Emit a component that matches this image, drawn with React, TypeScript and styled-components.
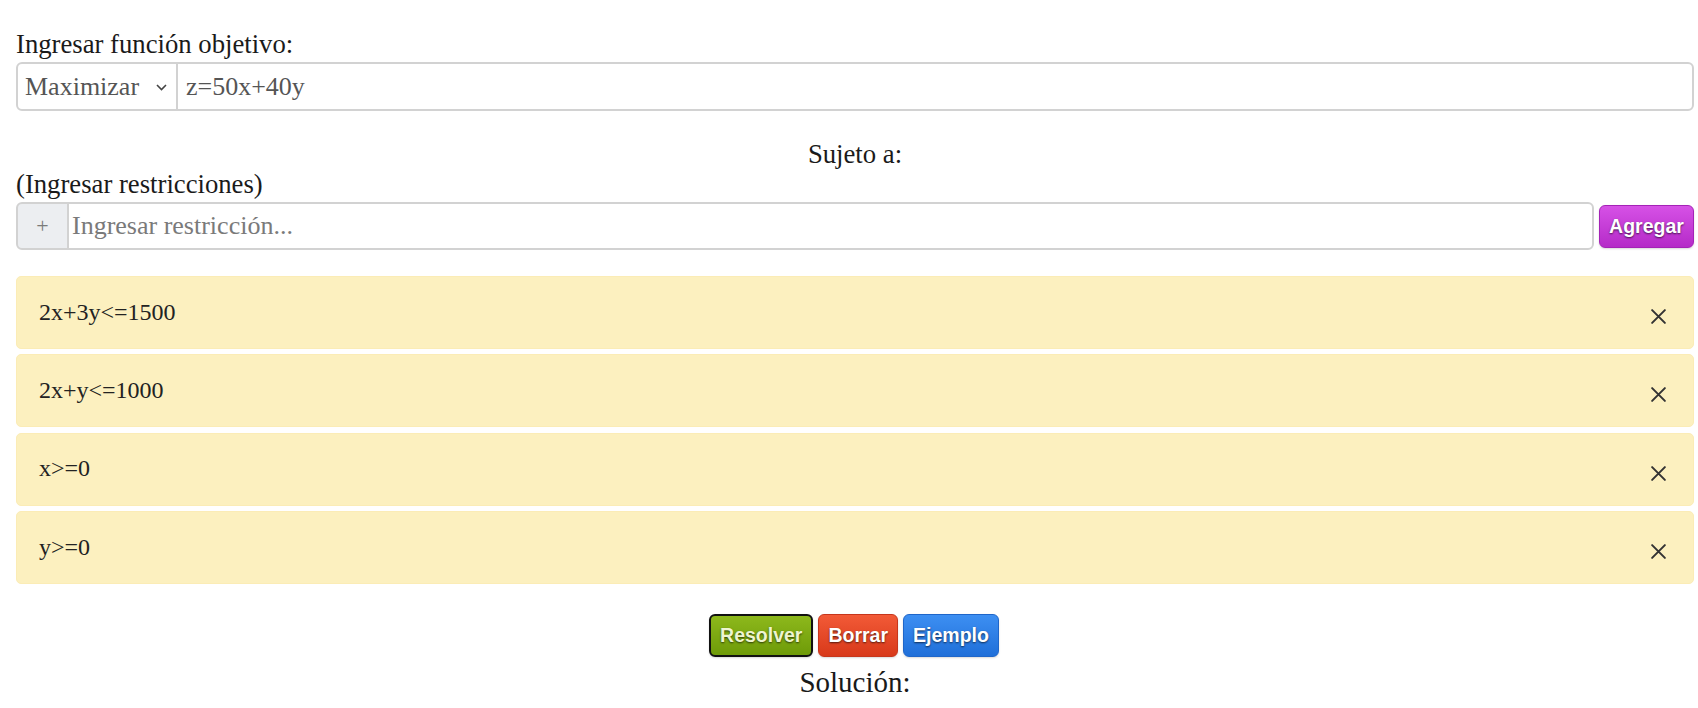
import React from 'react';
import styled, { createGlobalStyle, css } from 'styled-components';

const GlobalStyle = createGlobalStyle`
  html, body {
    margin: 0;
    padding: 0;
    background: #ffffff;
  }
  body {
    font-family: 'Liberation Serif', 'Times New Roman', serif;
    color: #1a1a1a;
  }
`;

const Page = styled.div`
  width: 1678px;
  margin-left: 16px;
  font-size: 26.7px;
`;

const Label = styled.div<{ $top: number; $center?: boolean }>`
  margin-top: ${p => p.$top}px;
  margin-bottom: 3px;
  line-height: 30px;
  text-align: ${p => (p.$center ? 'center' : 'left')};
`;

const InputGroup = styled.div<{ $height: number }>`
  display: flex;
  align-items: stretch;
  height: ${p => p.$height}px;
`;

const fieldBase = css`
  box-sizing: border-box;
  border: 2px solid #d2d2d2;
  font-family: 'Liberation Serif', 'Times New Roman', serif;
  font-size: 26px;
  color: #555;
  background: #fff;
  outline: none;
`;

const SelectWrap = styled.div`
  ${fieldBase};
  position: relative;
  width: 162px;
  border-radius: 6px 0 0 6px;
  display: flex;
  align-items: center;
  padding-left: 7px;
`;

const Chevron = styled.svg`
  position: absolute;
  right: 9px;
  top: 50%;
  margin-top: -3px;
`;

const TextField = styled.input<{ $pad: number }>`
  ${fieldBase};
  flex: 1;
  min-width: 0;
  padding: 0 10px 0 ${p => p.$pad}px;
  margin-left: -2px;
  border-radius: 0 6px 6px 0;
  &::placeholder {
    color: #7a7a7a;
  }
`;

const Addon = styled.div`
  ${fieldBase};
  width: 53px;
  background: #eceef1;
  border-radius: 6px 0 0 6px;
  color: #7a7a7a;
  display: flex;
  align-items: center;
  justify-content: center;
  font-size: 22px;
`;

const gradients = {
  purple: ['#d651e6', '#b52bc8', '#a423b6'],
  green: ['#8db81c', '#6e9b08', '#111111'],
  red: ['#f25a37', '#d8391a', '#c6361c'],
  blue: ['#3d8ff2', '#1f6fd9', '#1f66c9'],
};

type Tone = keyof typeof gradients;

const Button = styled.button<{ $tone: Tone; $focused?: boolean }>`
  box-sizing: border-box;
  height: 43px;
  padding: 0 9px;
  border-radius: 6px;
  border: ${p => (p.$focused ? '2px' : '1px')} solid ${p => gradients[p.$tone][2]};
  background: linear-gradient(to bottom, ${p => gradients[p.$tone][0]}, ${p => gradients[p.$tone][1]});
  color: ${p => (p.$tone === 'green' ? '#eef5d0' : '#ffffff')};
  font-family: 'Liberation Sans', Arial, sans-serif;
  font-weight: bold;
  font-size: 19.5px;
  text-shadow: 0 1px 2px rgba(0, 0, 0, 0.65);
  box-shadow: 0 1px 2px rgba(0, 0, 0, 0.15);
  cursor: pointer;
`;

const AddButton = styled(Button)`
  margin-left: 5px;
  align-self: center;
  width: 95px;
`;

const List = styled.div`
  margin-top: 26px;
  display: flex;
  flex-direction: column;
  gap: 5.33px;
`;

const Row = styled.div`
  box-sizing: border-box;
  height: 73px;
  background: #fcf0bf;
  border: 1px solid #fbecb6;
  border-radius: 5px;
  display: flex;
  align-items: center;
  justify-content: space-between;
  padding: 0 26px 0 22px;
  font-size: 24px;
  line-height: 1.15;
  color: #222;
`;

const Close = styled.svg`
  margin-top: 8px;
  cursor: pointer;
`;

const Actions = styled.div`
  margin-top: 30px;
  display: flex;
  justify-content: center;
  gap: 5px;
  padding-right: 2px;
`;

const Title = styled.div`
  margin-top: 9px;
  text-align: center;
  font-size: 29px;
  line-height: 32px;
`;

const restrictions = ['2x+3y<=1500', '2x+y<=1000', 'x>=0', 'y>=0'];

const CloseIcon = () => (
  <Close width="17" height="17" viewBox="0 0 16 16">
    <path d="M2 2 L14 14 M14 2 L2 14" stroke="#333" strokeWidth="1.9" strokeLinecap="round" />
  </Close>
);

export default function App() {
  return (
    <>
      <GlobalStyle />
      <Page>
        <Label $top={29}>Ingresar función objetivo:</Label>
        <InputGroup $height={49}>
          <SelectWrap>
            Maximizar
            <Chevron width="11" height="7" viewBox="0 0 11 7">
              <path d="M1 1 L5.5 5.5 L10 1" fill="none" stroke="#444" strokeWidth="1.6" />
            </Chevron>
          </SelectWrap>
          <TextField $pad={8} defaultValue="z=50x+40y" />
        </InputGroup>

        <Label $top={28} $center>Sujeto a:</Label>
        <Label $top={-3}>(Ingresar restricciones)</Label>
        <InputGroup $height={48}>
          <Addon>+</Addon>
          <TextField $pad={3} placeholder="Ingresar restricción..." />
          <AddButton $tone="purple">Agregar</AddButton>
        </InputGroup>

        <List>
          {restrictions.map(r => (
            <Row key={r}>
              <span>{r}</span>
              <CloseIcon />
            </Row>
          ))}
        </List>

        <Actions>
          <Button $tone="green" $focused>Resolver</Button>
          <Button $tone="red">Borrar</Button>
          <Button $tone="blue">Ejemplo</Button>
        </Actions>
        <Title>Solución:</Title>
      </Page>
    </>
  );
}
